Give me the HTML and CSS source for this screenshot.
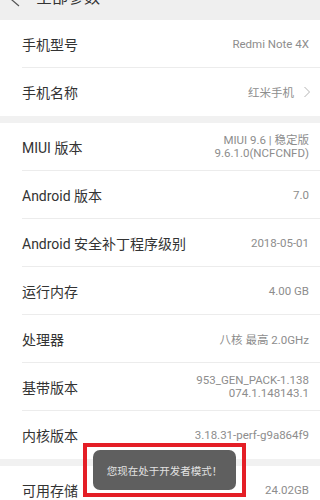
FILE: index.html
```html
<!DOCTYPE html>
<html>
<head>
<meta charset="utf-8">
<link rel="stylesheet" href="styles.css">
</head>
<body>
<div class="page">
  <header class="header">
    <svg class="back" width="12" height="20" viewBox="0 0 12 20"><polyline points="9,-6 2,0 9,6" fill="none" stroke="#555" stroke-width="1.2"/></svg>
    <span class="title">全部参数</span>
  </header>

  <section class="group">
    <div class="row"><span class="label">手机型号</span><span class="value">Redmi Note 4X</span></div>
    <div class="row"><span class="label">手机名称</span><span class="value">红米手机<svg class="chev" width="8" height="12" viewBox="0 0 8 12"><polyline points="1.5,1 6.5,6 1.5,11" fill="none" stroke="#b5b5b5" stroke-width="1"/></svg></span></div>
  </section>

  <section class="group">
    <div class="row"><span class="label">MIUI 版本</span><span class="value multi">MIUI 9.6 | 稳定版<br>9.6.1.0(NCFCNFD)</span></div>
    <div class="row"><span class="label">Android 版本</span><span class="value">7.0</span></div>
    <div class="row"><span class="label">Android 安全补丁程序级别</span><span class="value">2018-05-01</span></div>
    <div class="row"><span class="label">运行内存</span><span class="value">4.00 GB</span></div>
    <div class="row"><span class="label">处理器</span><span class="value">八核 最高 2.0GHz</span></div>
    <div class="row"><span class="label">基带版本</span><span class="value multi">953_GEN_PACK-1.138<br>074.1.148143.1</span></div>
    <div class="row"><span class="label">内核版本</span><span class="value">3.18.31-perf-g9a864f9</span></div>
  </section>

  <section class="group">
    <div class="row"><span class="label">可用存储</span><span class="value">24.02GB</span></div>
  </section>

  <div class="highlight">
    <div class="toast">您现在处于开发者模式！</div>
  </div>
</div>
</body>
</html>
```

FILE: styles.css
```css
html, body {
  margin: 0;
  padding: 0;
}
body {
  background: #f1f1f1;
  font-family: Roboto, "Noto Sans CJK SC", sans-serif;
  width: 320px;
  height: 500px;
  overflow: hidden;
}
.page {
  position: relative;
  height: 500px;
  overflow: hidden;
}
.header {
  height: 20px;
  background: #efefef;
  display: flex;
  align-items: flex-start;
  overflow: hidden;
}
.back {
  margin-left: 10px;
  flex: none;
}
.title {
  margin-left: 14px;
  margin-top: -10px;
  font-size: 16px;
  line-height: 16px;
  color: #333;
}
.group {
  background: #fff;
  margin-bottom: 7px;
  padding-left: 22px;
}
.row {
  display: flex;
  justify-content: space-between;
  align-items: center;
  height: 47px;
  border-bottom: 1px solid #ececec;
  padding-right: 11px;
}
.row:last-child {
  border-bottom: none;
  height: 48px;
}
.label {
  font-size: 14px;
  color: #333;
  white-space: nowrap;
}
.value {
  font-size: 11.5px;
  color: #8d8d8d;
  text-align: right;
  display: flex;
  align-items: center;
  white-space: nowrap;
}
.value.multi {
  display: block;
  line-height: 13px;
}
.chev {
  margin-left: 9px;
  margin-right: -2px;
}
.highlight {
  position: absolute;
  left: 83px;
  top: 443px;
  width: 155px;
  height: 46px;
  border: 4px solid #e41e26;
  display: flex;
  align-items: center;
  justify-content: center;
}
.toast {
  width: 143px;
  height: 40px;
  background: #5f5f5f;
  border-radius: 7px;
  color: #e2e2e2;
  font-size: 10.5px;
  display: flex;
  align-items: center;
  justify-content: center;
  font-family: "Noto Sans CJK SC", sans-serif;
}
```
